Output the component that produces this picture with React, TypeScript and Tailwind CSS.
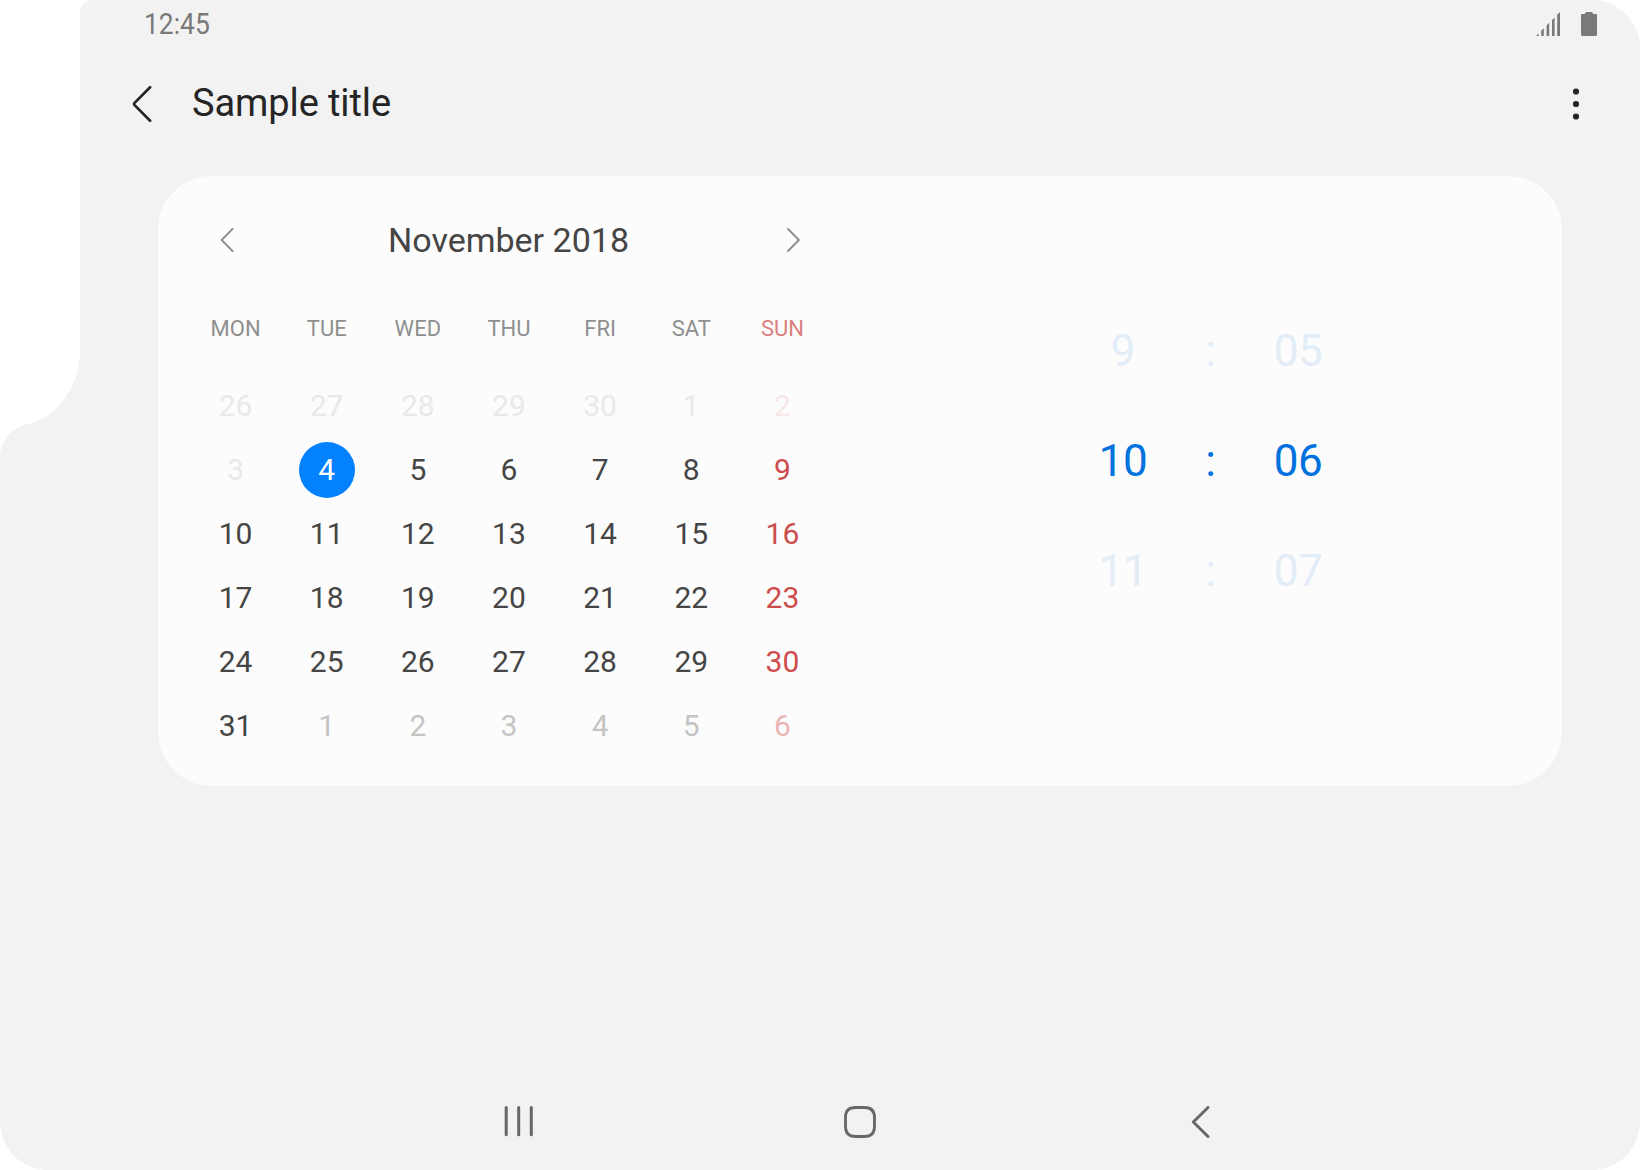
type Tone = "hidden" | "normal" | "dim";

const weekdays = ["MON", "TUE", "WED", "THU", "FRI", "SAT", "SUN"];

const days: { n: number; tone: Tone }[] = [
  ...[26, 27, 28, 29, 30, 1, 2, 3].map((n) => ({ n, tone: "hidden" as Tone })),
  ...Array.from({ length: 28 }, (_, i) => ({ n: i + 4, tone: "normal" as Tone })),
  ...[1, 2, 3, 4, 5, 6].map((n) => ({ n, tone: "dim" as Tone })),
];

const weekdayTone: Record<Tone, string> = {
  hidden: "text-[#e9e9e9]",
  normal: "text-[#454545]",
  dim: "text-[#c4c4c4]",
};

const sundayTone: Record<Tone, string> = {
  hidden: "text-[#f8e8e8]",
  normal: "text-[#cd4c4c]",
  dim: "text-[#ebb5b5]",
};

const times = [
  { hour: "9", minute: "05", active: false },
  { hour: "10", minute: "06", active: true },
  { hour: "11", minute: "07", active: false },
];

function StatusBar() {
  return (
    <div className="flex h-12 items-center justify-between pl-[144px] pr-[43px] text-[#797979]">
      <span className="origin-left scale-x-[0.88] text-[30px] leading-[48px]">12:45</span>
      <div className="flex items-center gap-[21px]">
        <svg width="24" height="24" viewBox="0 0 24 24" fill="currentColor">
          <path d="M0 24L2.6 21.4V24ZM5.2 24V18.8L7.8 16.2V24ZM10.6 24V13.4L13.2 10.8V24ZM16 24V8L18.6 5.4V24ZM21.2 24V2.8L24 0V24Z" />
        </svg>
        <svg width="16" height="24" viewBox="0 0 16 24" fill="currentColor">
          <path d="M5 0H11L12.3 2H15Q16 2 16 3V22.5Q16 24 14.5 24H1.5Q0 24 0 22.5V3Q0 2 1 2H3.7Z" />
        </svg>
      </div>
    </div>
  );
}

function AppBar() {
  return (
    <header className="flex h-28 items-center pl-[132px] pr-[60px] text-[#252525]">
      <svg width="20" height="38" viewBox="0 0 20 38" fill="none" stroke="currentColor" strokeWidth="2.7" strokeLinecap="round" strokeLinejoin="round">
        <path d="M18.1 2.3L2.6 17.9Q1.6 19 2.6 20.1L18.1 35.7" />
      </svg>
      <h1 className="ml-10 flex-1 pb-[3px] text-[38px] leading-[48px] tracking-[-0.1px]">Sample title</h1>
      <svg width="8" height="32" viewBox="0 0 8 32" fill="currentColor">
        <circle cx="4" cy="3.5" r="3.1" />
        <circle cx="4" cy="16" r="3.1" />
        <circle cx="4" cy="28.5" r="3.1" />
      </svg>
    </header>
  );
}

function Calendar() {
  return (
    <section className="w-[638px]">
      <div className="flex h-[128px] items-center justify-between pl-[30px] pr-[27px] text-[#8c8c8c]">
        <svg width="14" height="24" viewBox="0 0 14 24" fill="none" stroke="currentColor" strokeWidth="1.8" strokeLinecap="round" strokeLinejoin="round">
          <path d="M12.5 1L1.6 12L12.5 23" />
        </svg>
        <h2 className="pr-1 text-[34px] leading-[48px] text-[#454545]">November 2018</h2>
        <svg width="14" height="24" viewBox="0 0 14 24" fill="none" stroke="currentColor" strokeWidth="1.8" strokeLinecap="round" strokeLinejoin="round">
          <path d="M1 1L11.9 12L1 23" />
        </svg>
      </div>
      <div className="mb-[25px] mt-[5px] grid h-10 grid-cols-7 items-center text-center text-[22px] leading-[40px] text-[#8f8f8f]">
        {weekdays.map((d) => (
          <span key={d} className={d === "SUN" ? "text-[#db7f7f]" : ""}>
            {d}
          </span>
        ))}
      </div>
      <div className="grid grid-cols-7">
        {days.map((d, i) => {
          const selected = d.n === 4 && d.tone === "normal";
          const color = i % 7 === 6 ? sundayTone[d.tone] : weekdayTone[d.tone];
          return (
            <div key={i} className="flex h-16 items-center justify-center">
              <span
                className={`size-14 rounded-full text-center text-[30px] leading-[56px] ${
                  selected ? "bg-[#0381fe] text-white" : color
                }`}
              >
                {d.n}
              </span>
            </div>
          );
        })}
      </div>
    </section>
  );
}

function TimePicker() {
  return (
    <section className="ml-[251px] mt-[120px]">
      {times.map((t) => (
        <div
          key={t.minute}
          className={`grid h-[110px] grid-cols-[88px_87px_88px] items-center text-center text-[44px] leading-[110px] tracking-[-0.4px] ${
            t.active ? "text-[#0072de]" : "text-[#e2edf8]"
          }`}
        >
          <span>{t.hour}</span>
          <span>:</span>
          <span>{t.minute}</span>
        </div>
      ))}
    </section>
  );
}

function NavBar() {
  return (
    <nav className="mt-auto flex h-24 items-center pl-[504px] text-[#666666]">
      <svg width="30" height="32" viewBox="0 0 30 32" fill="none" stroke="currentColor" strokeWidth="3" strokeLinecap="round">
        <path d="M2.2 1.5V28.8M14.7 1.5V28.8M27.3 1.5V28.8" />
      </svg>
      <svg className="ml-[310px]" width="32" height="32" viewBox="0 0 32 32" fill="none" stroke="currentColor" strokeWidth="2.8">
        <path d="M11.5 1.5H20.5Q30.5 1.5 30.5 11.5V20.5Q30.5 30.5 20.5 30.5H11.5Q1.5 30.5 1.5 20.5V11.5Q1.5 1.5 11.5 1.5Z" />
      </svg>
      <svg className="ml-[315px]" width="19" height="32" viewBox="0 0 19 32" fill="none" stroke="currentColor" strokeWidth="2.9" strokeLinecap="round" strokeLinejoin="round">
        <path d="M17 1.5L2.3 16L17 30.5" />
      </svg>
    </nav>
  );
}

export default function App() {
  return (
    <div className="h-[1170px] w-[1640px] bg-white font-['Roboto',sans-serif]">
      <div className="relative flex h-full flex-col overflow-hidden rounded-[48px] bg-[#f2f2f2]">
        <svg className="absolute left-0 top-0" width="100" height="460" viewBox="0 0 100 460" fill="#ffffff">
          <path d="M0 0H94Q80 0 80 14V350C80 386 58 417 28 424C14 427 3 437 0 453Z" />
        </svg>
        <StatusBar />
        <AppBar />
        <main className="ml-[158px] mt-4 flex h-[610px] w-[1404px] rounded-[54px] bg-[#fcfcfc] pl-8">
          <Calendar />
          <TimePicker />
        </main>
        <NavBar />
      </div>
    </div>
  );
}
